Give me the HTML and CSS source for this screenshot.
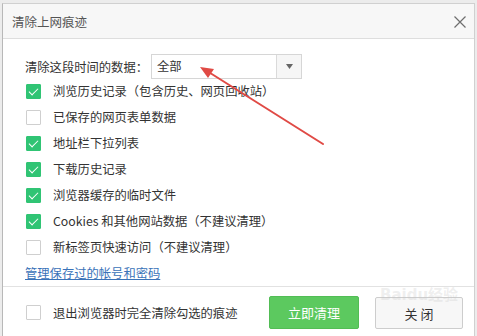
FILE: index.html
```html
<!DOCTYPE html>
<html lang="zh">
<head>
<meta charset="utf-8">
<link rel="stylesheet" href="styles.css">
</head>
<body>
<div class="dialog">
  <div class="titlebar">
    <span class="title">清除上网痕迹</span>
    <svg class="close-x" width="12" height="12" viewBox="0 0 12 12"><path d="M0.5 0.5 L11.5 11.5 M11.5 0.5 L0.5 11.5" stroke="#6e6e6e" stroke-width="1.2" fill="none"/></svg>
  </div>
  <div class="content">
    <div class="range-row">
      <span class="range-label">清除这段时间的数据：</span>
      <div class="select">
        <span class="select-value">全部</span>
        <span class="select-btn"><svg width="7" height="5" viewBox="0 0 7 5"><path d="M0 0 H7 L3.5 5 Z" fill="#666"/></svg></span>
      </div>
    </div>
    <div class="row"><span class="cb on"></span><span>浏览历史记录（包含历史、网页回收站）</span></div>
    <div class="row"><span class="cb"></span><span>已保存的网页表单数据</span></div>
    <div class="row"><span class="cb on"></span><span>地址栏下拉列表</span></div>
    <div class="row"><span class="cb on"></span><span>下载历史记录</span></div>
    <div class="row"><span class="cb on"></span><span>浏览器缓存的临时文件</span></div>
    <div class="row"><span class="cb on"></span><span>Cookies 和其他网站数据（不建议清理）</span></div>
    <div class="row"><span class="cb"></span><span>新标签页快速访问（不建议清理）</span></div>
    <div class="row link-row"><a class="link" href="#">管理保存过的帐号和密码</a></div>
  </div>
  <div class="footer">
    <div class="row foot-check"><span class="cb"></span><span>退出浏览器时完全清除勾选的痕迹</span></div>
    <div class="buttons">
      <button class="btn primary">立即清理</button>
      <button class="btn plain">关 闭</button>
    </div>
  </div>
  <div class="watermark">Baidu经验</div>
  <svg class="arrow" width="477" height="336" viewBox="0 0 477 336">
    <line x1="323" y1="144" x2="207" y2="71" stroke="#e04a45" stroke-width="2" stroke-linecap="round"/>
    <path d="M200 67 L214 69 L208 78 Z" fill="#e04a45"/>
  </svg>
</div>
</body>
</html>
```
FILE: styles.css
```css
html, body {
  margin: 0;
  padding: 0;
}
body {
  width: 477px;
  height: 336px;
  background: #ececec;
  overflow: hidden;
  font-family: "Noto Sans CJK SC", "Noto Sans", sans-serif;
  font-size: 12.3px;
  color: #333;
  text-spacing-trim: space-all;
}
.dialog {
  margin: 3px 0 0 2px;
  width: 471px;
  height: 340px;
  background: #fff;
  border: 1px solid #d0d0d0;
  border-left-color: #b8b8b8;
}
.titlebar {
  height: 34px;
  background: #f7f7f7;
  border-bottom: 1px solid #dedede;
  display: flex;
  align-items: center;
  justify-content: space-between;
  padding: 0 8px 0 9px;
}
.title {
  color: #555;
  font-size: 12.5px;
}
.close-x {
  display: block;
  margin-top: 2px;
}
.content {
  padding: 15px 0 0 22px;
}
.range-row {
  display: flex;
  align-items: center;
  height: 24px;
}
.range-label {
  width: 126px;
  flex: none;
  padding-top: 1px;
}
.select {
  width: 149px;
  height: 23px;
  border: 1px solid #d6d6d6;
  display: flex;
  align-items: center;
  background: #fff;
}
.select-value {
  flex: 1;
  padding-left: 5px;
}
.select-btn {
  width: 24px;
  height: 23px;
  border-left: 1px solid #dadada;
  background: #f6f6f6;
  display: flex;
  align-items: center;
  justify-content: center;
}
.row {
  height: 26px;
  display: flex;
  align-items: center;
  gap: 12px;
}
.cb {
  width: 13px;
  height: 13px;
  border: 1px solid #cfcfcf;
  border-radius: 1px;
  background: #fff;
  margin-left: 1px;
  flex: none;
  position: relative;
}
.cb.on {
  background: #30c474;
  border-color: #30c474;
}
.cb.on::after {
  content: "";
  position: absolute;
  left: 4px;
  top: 1px;
  width: 4px;
  height: 8px;
  border-right: 1.5px solid #fff;
  border-bottom: 1.5px solid #fff;
  transform: rotate(45deg);
}
.link-row {
  gap: 0;
}
.link {
  color: #3a72b8;
  text-decoration: underline;
}
.footer {
  border-top: 1px solid #e2e2e2;
  display: flex;
  align-items: center;
  justify-content: space-between;
  padding: 9px 11px 0 22px;
}
.foot-check {
  height: 33px;
}
.buttons {
  display: flex;
  gap: 16px;
}
.btn {
  font-family: "Noto Sans CJK SC", sans-serif;
  font-size: 13px;
  height: 33px;
  border-radius: 2px;
  padding: 0;
  cursor: pointer;
}
.btn.primary {
  width: 90px;
  background: #5cc95f;
  border: 1px solid #52bd55;
  color: #fff;
}
.btn.plain {
  width: 88px;
  height: 32px;
  margin-top: 1px;
  background: #f7f7f7;
  border: 1px solid #cdcdcd;
  color: #333;
}
.watermark {
  position: absolute;
  left: 380px;
  top: 288px;
  font-family: "DejaVu Sans", "Noto Sans CJK SC", sans-serif;
  font-size: 15px;
  font-weight: bold;
  color: rgba(200, 200, 200, 0.3);
  line-height: 1;
  pointer-events: none;
}
.arrow {
  position: absolute;
  left: 0;
  top: 0;
  pointer-events: none;
}
```
